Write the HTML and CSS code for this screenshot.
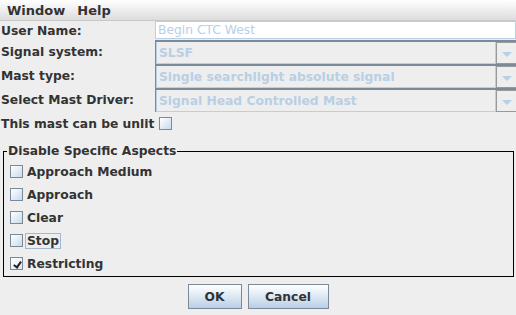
FILE: index.html
```html
<!DOCTYPE html>
<html lang="en">
<head>
    <meta charset="UTF-8">
    <title>Signal Mast</title>
    <link rel="stylesheet" href="styles.css">
</head>
<body>
    <div class="menubar">
        <span class="menu">Window</span>
        <span class="menu">Help</span>
    </div>
    <div class="form">
        <label class="lbl">User Name:</label>
        <div class="field">Begin CTC West</div>

        <label class="lbl">Signal system:</label>
        <div class="combo"><span class="combo-text">SLSF</span><span class="arrow"></span></div>

        <label class="lbl">Mast type:</label>
        <div class="combo"><span class="combo-text">Single searchlight absolute signal</span><span class="arrow"></span></div>

        <label class="lbl">Select Mast Driver:</label>
        <div class="combo"><span class="combo-text">Signal Head Controlled Mast</span><span class="arrow"></span></div>
    </div>
    <div class="unlit">This mast can be unlit <span class="box"></span></div>

    <fieldset class="aspects">
        <legend>Disable Specific Aspects</legend>
        <div class="aspect"><span class="box"></span><span class="txt">Approach Medium</span></div>
        <div class="aspect"><span class="box"></span><span class="txt">Approach</span></div>
        <div class="aspect"><span class="box"></span><span class="txt">Clear</span></div>
        <div class="aspect"><span class="box"></span><span class="txt focus">Stop</span></div>
        <div class="aspect"><span class="box checked"></span><span class="txt">Restricting</span></div>
    </fieldset>

    <div class="buttons">
        <button class="btn ok">OK</button>
        <button class="btn cancel">Cancel</button>
    </div>
</body>
</html>
```

FILE: styles.css
```css
* {
    margin: 0;
    padding: 0;
    box-sizing: border-box;
}

body {
    font-family: 'DejaVu Sans', sans-serif;
    font-size: 12.3px;
    font-weight: bold;
    color: #333;
    background: #eeeeee;
    width: 516px;
    height: 315px;
    overflow: hidden;
}

.menubar {
    height: 21px;
    background: linear-gradient(#ffffff, #dcdcdc);
    border-bottom: 1px solid #c8c8c8;
    display: flex;
    align-items: center;
    padding-left: 7px;
    gap: 12px;
    font-size: 13px;
}

.form {
    display: grid;
    grid-template-columns: 155px 1fr;
    grid-template-rows: 19px 24px 24px 24px;
}

.lbl {
    display: flex;
    align-items: center;
    padding-left: 1px;
}

.field {
    border: 1px solid #b8cfe5;
    background: #fff;
    color: #b8cfe5;
    font-weight: normal;
    display: flex;
    align-items: center;
    padding-left: 2px;
    height: 18px;
}

.combo {
    display: flex;
    border-top: 2px solid #7a8a99;
    border-left: 1px solid #7a8a99;
    background: #eeeeee;
    height: 24px;
}

.combo-text {
    flex: 1;
    border: 1px solid #b8cfe5;
    border-top: none;
    color: #b8cfe5;
    display: flex;
    align-items: center;
    padding-left: 2px;
}

.arrow {
    width: 20px;
    border-left: 1px solid #999;
    border-top: 1px solid #999;
    border-bottom: 1px solid #999;
    position: relative;
}

.arrow::after {
    content: "";
    position: absolute;
    left: 5px;
    top: 9px;
    border-left: 5px solid transparent;
    border-right: 5px solid transparent;
    border-top: 5px solid #b8cfe5;
}

.unlit {
    display: flex;
    align-items: center;
    gap: 5px;
    height: 23px;
    padding-left: 1px;
}

.box {
    display: inline-block;
    width: 13px;
    height: 13px;
    border: 1px solid #7a8a99;
    background: linear-gradient(135deg, #ffffff, #c8daeb);
    position: relative;
}

.box.checked {
    background: linear-gradient(135deg, #ffffff, #dde8f3);
}

.box.checked::after {
    content: "";
    position: absolute;
    left: 4px;
    top: 2px;
    width: 3px;
    height: 6px;
    border-right: 2px solid #222;
    border-bottom: 2px solid #222;
    transform: rotate(35deg);
}

.aspects {
    margin: 9px 2px 0 3px;
    border: 1px solid #000;
    padding: 2px 0 1px 6px;
}

.aspects legend {
    margin-left: -3px;
    padding: 0 1px;
}

.aspect {
    display: flex;
    align-items: center;
    height: 23px;
    gap: 2px;
}

.txt {
    padding: 0 1px;
    border: 1px solid transparent;
}

.txt.focus {
    border-color: #a3b8cc;
}

.buttons {
    display: flex;
    justify-content: center;
    gap: 6px;
    margin-top: 7px;
}

.btn {
    font-family: 'DejaVu Sans', sans-serif;
    font-size: 12.3px;
    font-weight: bold;
    color: #333;
    height: 25px;
    border: 1px solid #7a8a99;
    background: linear-gradient(#ffffff, #dde8f3 50%, #b8cfe5);
}

.ok {
    width: 54px;
}

.cancel {
    width: 81px;
}
```
